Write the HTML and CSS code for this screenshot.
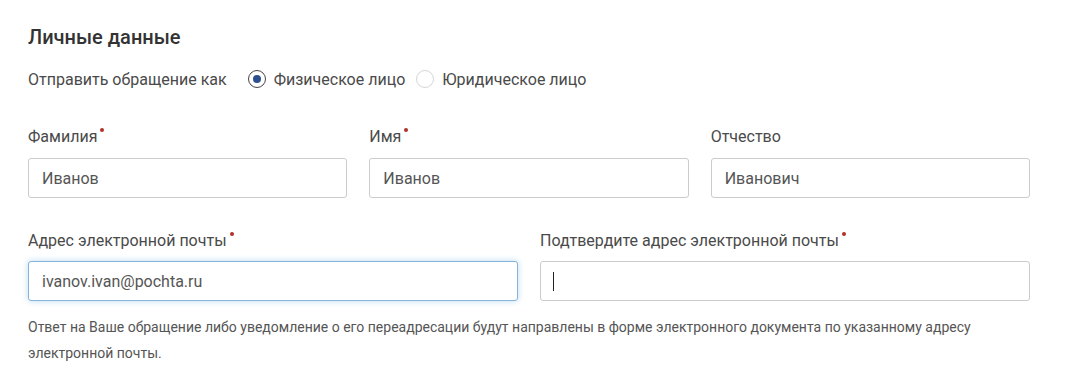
FILE: index.html
```html
<!DOCTYPE html>
<html lang="ru">
<head>
    <meta charset="UTF-8">
    <meta name="viewport" content="width=device-width, initial-scale=1.0">
    <title>Личные данные</title>
    <link rel="stylesheet" href="styles.css">
</head>
<body>
    <div class="form">
        <h2 class="title">Личные данные</h2>

        <div class="sender">
            <span class="sender-label">Отправить обращение как</span>
            <label class="radio">
                <span class="radio-mark checked"></span>
                Физическое лицо
            </label>
            <label class="radio">
                <span class="radio-mark"></span>
                Юридическое лицо
            </label>
        </div>

        <div class="row three">
            <div class="field">
                <label class="label required">Фамилия</label>
                <input type="text" class="input" value="Иванов">
            </div>
            <div class="field">
                <label class="label required">Имя</label>
                <input type="text" class="input" value="Иванов">
            </div>
            <div class="field">
                <label class="label">Отчество</label>
                <input type="text" class="input" value="Иванович">
            </div>
        </div>

        <div class="row two">
            <div class="field">
                <label class="label required">Адрес электронной почты</label>
                <input type="text" class="input focused" value="ivanov.ivan@pochta.ru">
            </div>
            <div class="field">
                <label class="label required">Подтвердите адрес электронной почты</label>
                <div class="input-wrap">
                    <input type="text" class="input" value="">
                    <span class="caret"></span>
                </div>
            </div>
        </div>

        <p class="hint">Ответ на Ваше обращение либо уведомление о его переадресации будут направлены в форме электронного документа по указанному адресу электронной почты.</p>
    </div>
</body>
</html>
```

FILE: styles.css
```css
body {
    margin: 0;
    background-color: #fff;
    font-family: 'Roboto', 'Liberation Sans', sans-serif;
    color: #4a4a4a;
}
.form {
    padding: 25px 43px 0 28px;
}
.title {
    margin: 0;
    font-size: 20px;
    line-height: 24px;
    font-weight: 500;
    color: #333;
}
.sender {
    display: flex;
    align-items: center;
    margin-top: 18px;
    height: 24px;
    font-size: 16px;
    color: #4a4a4a;
}
.sender-label {
    margin-right: 21px;
}
.radio {
    display: flex;
    align-items: center;
    margin-right: 11px;
}
.radio-mark {
    display: inline-flex;
    align-items: center;
    justify-content: center;
    width: 16px;
    height: 16px;
    margin-right: 8px;
    border: 1px solid #d6d6d6;
    border-radius: 50%;
}
.radio-mark.checked {
    border-color: #444;
}
.radio-mark.checked::after {
    content: '';
    width: 8px;
    height: 8px;
    border-radius: 50%;
    background-color: #2c4f8e;
}
.row {
    display: grid;
    gap: 22px;
}
.row.three {
    grid-template-columns: repeat(3, 1fr);
    margin-top: 36px;
}
.row.two {
    grid-template-columns: repeat(2, 1fr);
    margin-top: 33px;
}
.field {
    display: flex;
    flex-direction: column;
}
.label {
    font-size: 16px;
    line-height: 20px;
    margin-bottom: 10px;
    color: #4a4a4a;
}
.row.three .label {
    margin-bottom: 11px;
}
.label.required::after {
    content: '';
    display: inline-block;
    width: 4px;
    height: 4px;
    margin-left: 3px;
    vertical-align: top;
    margin-top: 1px;
    border-radius: 50%;
    background-color: #b0322a;
}
.input {
    box-sizing: border-box;
    width: 100%;
    height: 40px;
    padding: 0 13px;
    border: 1px solid #ccc;
    border-radius: 3px;
    font-family: 'Roboto', 'Liberation Sans', sans-serif;
    font-size: 16px;
    color: #555;
    background-color: #fff;
    outline: none;
}
.input.focused {
    border-color: #86b4d8;
    box-shadow: 0 0 6px rgba(102, 175, 233, 0.45);
}
.input-wrap {
    position: relative;
}
.caret {
    position: absolute;
    left: 13px;
    top: 11px;
    width: 1px;
    height: 19px;
    background-color: #222;
}
.hint {
    margin: 13px 0 0;
    font-size: 14px;
    line-height: 26px;
    color: #555;
}
```
